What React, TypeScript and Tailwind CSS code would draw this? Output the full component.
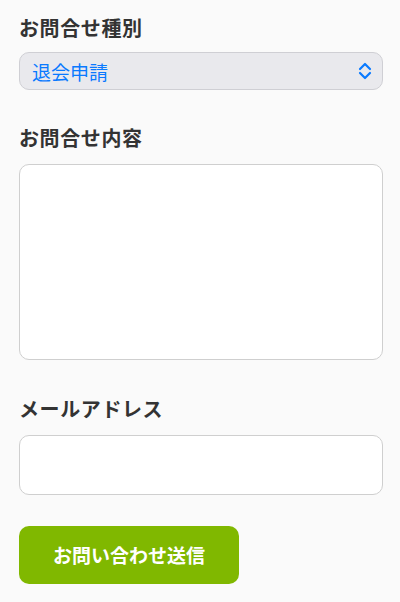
export default function App() {
	return (
		<div
			className="min-h-[602px] bg-[#fafafa] pl-[19px] pr-[17px] pt-[14px] text-[#333]"
			style={{ fontFamily: '"Noto Sans CJK JP", "Noto Sans", sans-serif' }}
		>
			<h2 className="text-[20px] font-bold leading-[28px] tracking-[0.6px]">お問合せ種別</h2>
			<div className="mt-[10px] flex h-[38px] items-center justify-between rounded-[10px] border border-[#cfcfd4] bg-[#e9e9ed] pl-[12px] pr-[10px]">
				<span className="text-[19px] leading-none text-[#0a7aff]">退会申請</span>
				<svg width="14" height="18" viewBox="0 0 14 18" fill="none" stroke="#0a7aff" strokeWidth="2.2" strokeLinecap="round" strokeLinejoin="round">
					<path d="M2 7l5-5 5 5" />
					<path d="M2 11l5 5 5-5" />
				</svg>
			</div>
			<h2 className="mt-[34px] text-[20px] font-bold leading-[28px] tracking-[0.6px]">お問合せ内容</h2>
			<textarea className="mt-[12px] block h-[196px] w-full resize-none rounded-[10px] border border-[#cfcfcf] bg-white" />
			<h2 className="mt-[35px] text-[20px] font-bold leading-[28px] tracking-[0.6px]">メールアドレス</h2>
			<input type="email" className="mt-[12px] block h-[60px] w-full rounded-[10px] border border-[#cfcfcf] bg-white" />
			<button className="mt-[31px] flex h-[58px] w-[220px] items-center justify-center rounded-[10px] bg-[#80b800] text-[19px] font-bold text-white">
				お問い合わせ送信
			</button>
		</div>
	);
}
